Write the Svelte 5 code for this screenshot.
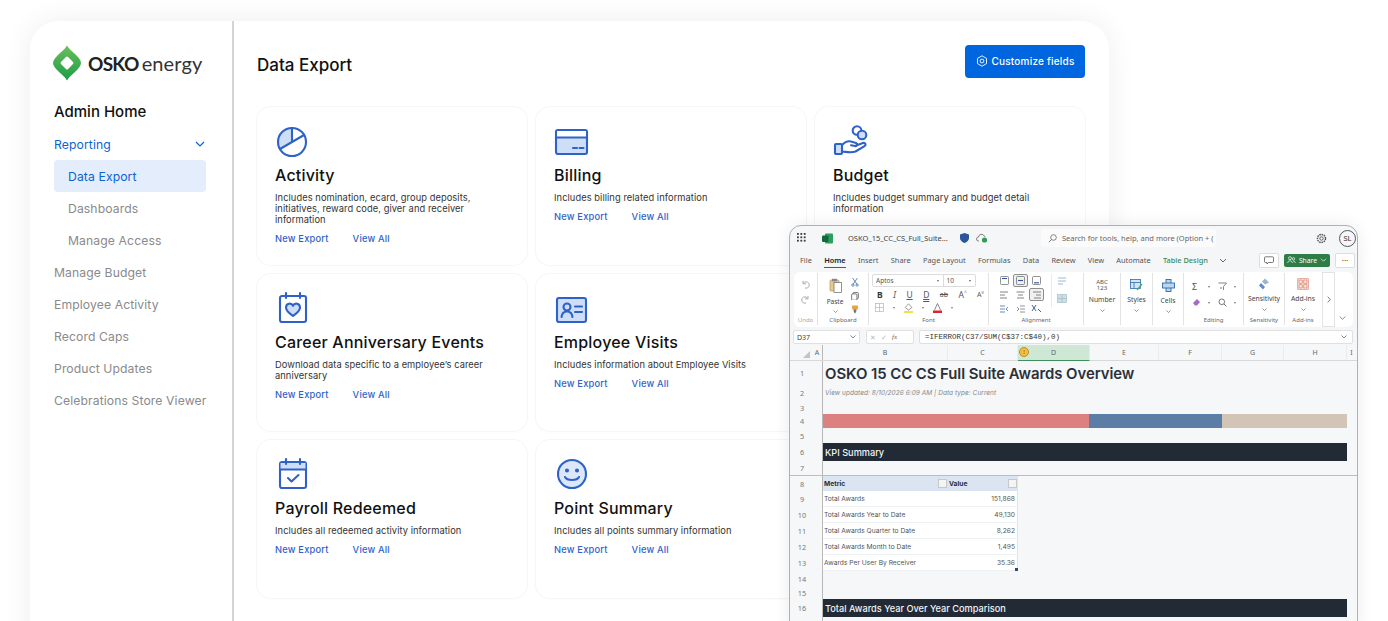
<script>
  const nav = [
    { t: 'Reporting', c: 'active', chevron: true },
    { t: 'Data Export', c: 'sub current' },
    { t: 'Dashboards', c: 'sub' },
    { t: 'Manage Access', c: 'sub' },
    { t: 'Manage Budget', c: '' },
    { t: 'Employee Activity', c: '' },
    { t: 'Record Caps', c: '' },
    { t: 'Product Updates', c: '' },
    { t: 'Celebrations Store Viewer', c: '' }
  ];
  const cards = [
    { id: 'pie', t: 'Activity', d: 'Includes nomination, ecard, group deposits, initiatives, reward code, giver and receiver information', links: true },
    { id: 'bill', t: 'Billing', d: 'Includes billing related information', links: true },
    { id: 'budget', t: 'Budget', d: 'Includes budget summary and budget detail information', links: false },
    { id: 'heart', t: 'Career Anniversary Events', d: 'Download data specific to a employee\u2019s career anniversary', links: true },
    { id: 'person', t: 'Employee Visits', d: 'Includes information about Employee Visits', links: true },
    { id: 'none', t: '', d: '' },
    { id: 'check', t: 'Payroll Redeemed', d: 'Includes all redeemed activity information', links: true },
    { id: 'smile', t: 'Point Summary', d: 'Includes all points summary information', links: true },
    { id: 'none', t: '', d: '' }
  ];
  const tabs = ['File', 'Home', 'Insert', 'Share', 'Page Layout', 'Formulas', 'Data', 'Review', 'View', 'Automate'];
  const cols = [['B', 'b'], ['C', 'c'], ['D', 'd'], ['E', 'e'], ['F', 'f'], ['G', 'g'], ['H', 'h'], ['I', 'i']];
  const rows = [
    { n: 1, h: 24, k: 'title' }, { n: 2, h: 16, k: 'sub' }, { n: 3, h: 13 }, { n: 4, h: 14, k: 'bars' },
    { n: 5, h: 15 }, { n: 6, h: 18, k: 'band', t: 'KPI Summary' }, { n: 7, h: 15, k: 'freeze' },
    { n: 8, h: 15, k: 'thead' },
    { n: 9, h: 16, k: 'tr', a: 'Total Awards', b: '151,868' },
    { n: 10, h: 16, k: 'tr', a: 'Total Awards Year to Date', b: '49,130' },
    { n: 11, h: 16, k: 'tr', a: 'Total Awards Quarter to Date', b: '8,262' },
    { n: 12, h: 16, k: 'tr', a: 'Total Awards Month to Date', b: '1,495' },
    { n: 13, h: 16, k: 'tr last', a: 'Awards Per User By Receiver', b: '35.36' },
    { n: 14, h: 16 }, { n: 15, h: 12 }, { n: 16, h: 18, k: 'band', t: 'Total Awards Year Over Year Comparison' }, { n: '', h: 10 }
  ];
</script>

<div class="page">
  <div class="shell">
    <aside class="side">
      <div class="logo">
        <svg class="mark" viewBox="0 0 28 36" width="28" height="36">
          <defs>
            <linearGradient id="lg" x1="0" y1="0" x2="0" y2="1">
              <stop offset="0" stop-color="#6cbf5c" />
              <stop offset="1" stop-color="#1c9c47" />
            </linearGradient>
          </defs>
          <path d="M14 0.5 C16 4 19 6 22 9 C25 12 28 15 28 18 C28 21 25 24 22 27 C19 30 16 32 14 35.5 C12 32 9 30 6 27 C3 24 0 21 0 18 C0 15 3 12 6 9 C9 6 12 4 14 0.5 Z" fill="url(#lg)" />
          <rect x="9" y="13" width="10" height="10" rx="1.5" fill="#fff" transform="rotate(45 14 18)" />
        </svg>
        <span class="osko">OSKO</span><span class="energy">energy</span>
      </div>
      <div class="home">Admin Home</div>
      <nav>
        {#each nav as n}
          <div class="nav {n.c}">
            <span>{n.t}</span>
            {#if n.chevron}
              <svg width="10" height="6" viewBox="0 0 10 6"><path d="M1 1l4 4 4-4" fill="none" stroke="#0b63d6" stroke-width="1.2" /></svg>
            {/if}
          </div>
        {/each}
      </nav>
    </aside>

    <main class="main">
      <header class="head">
        <h1>Data Export</h1>
        <button class="cta">
          <svg width="12" height="12" viewBox="0 0 12 12" fill="none" stroke="#fff" stroke-width="0.9"><path d="M6 .8l4.5 2.6v5.2L6 11.2 1.5 8.6V3.4z" stroke-linejoin="round" /><circle cx="6" cy="6" r="1.9" /></svg>
          Customize fields
        </button>
      </header>
      <section class="grid">
        {#each cards as c}
          <article class="card">
            {#if c.id !== 'none'}
              <div class="ico {c.id}">
                <svg width="36" height="34" viewBox="0 0 36 34" fill="none" stroke="#2f62c9" stroke-width="2.1" stroke-linejoin="round" stroke-linecap="round">
                  {#if c.id === 'pie'}
                    <path d="M17 18 L17 4 A14 14 0 0 0 5 25 Z" fill="#cfdef8" stroke="none" />
                    <circle cx="17" cy="18" r="14" />
                    <path d="M17 4 V18 L29 11 M17 18 L5 25" />
                  {:else if c.id === 'bill'}
                    <rect x="2" y="6" width="31" height="24" rx="2" fill="#cfdef8" />
                    <path d="M3 7h29v6H3z" fill="#fff" stroke="none" />
                    <path d="M2 13.5h31M19 24h4M25.5 24h4" />
                  {:else if c.id === 'budget'}
                    <circle cx="24" cy="6.5" r="4.3" />
                    <circle cx="29" cy="11" r="4.3" fill="#cfdef8" />
                    <path d="M9 21c3-3 6-4.500 9-3.500l5 1.500c2 1 1 3.500-1 3l-4-.8M23 21.500l7-2.500c2.500-.5 3.500 2 1.500 3.200l-9 5.300c-4 1.500-8 .5-13.500 0" fill="#fff" />
                    <rect x="2" y="20" width="7" height="10" rx="1" fill="#cfdef8" />
                  {:else if c.id === 'heart'}
                    <rect x="5" y="5" width="26" height="26" rx="2" />
                    <path d="M11 2v5M25 2v5" />
                    <path d="M18 25c-4-3-7-5-7-8.500 0-4.500 5.500-5 7-1.800 1.500-3.200 7-2.700 7 1.800C25 20 22 22 18 25z" fill="#cfdef8" />
                  {:else if c.id === 'person'}
                    <rect x="3" y="7" width="29" height="24" rx="2" fill="#cfdef8" />
                    <circle cx="13" cy="16" r="3.500" />
                    <path d="M7.500 26c.5-4 3-5.500 5.500-5.500s5 1.500 5.500 5.500M21 15.500h7M21 21h7" />
                  {:else if c.id === 'check'}
                    <rect x="5" y="5" width="26" height="26" rx="2" />
                    <path d="M5.500 6h25v6h-25z" fill="#cfdef8" stroke="none" />
                    <path d="M5 12.500h26M11 2v5M25 2v5M13 21l3.500 3.500 7-6.500" />
                  {:else if c.id === 'smile'}
                    <circle cx="18" cy="17" r="14" fill="#dce7fa" />
                    <circle cx="13" cy="13.500" r="1" fill="#2f62c9" />
                    <circle cx="23" cy="13.500" r="1" fill="#2f62c9" />
                    <path d="M11 20c2 4 12 4 14 0" />
                  {/if}
                </svg>
              </div>
              <h2>{c.t}</h2>
              <p>{c.d}</p>
              {#if c.links}
                <div class="links"><a href="#a">New Export</a><a href="#b">View All</a></div>
              {/if}
            {/if}
          </article>
        {/each}
      </section>
    </main>
  </div>

  <div class="xl">
    <div class="titlebar">
      <svg class="waffle" width="9" height="10" viewBox="0 0 9 10" fill="#3b3b3b">
        {#each [0, 3.4, 6.8] as y}{#each [0, 3.4, 6.8] as x}<rect {x} {y} width="1.800" height="1.800" />{/each}{/each}
      </svg>
      <svg class="xicon" width="11" height="11" viewBox="0 0 11 11"><rect x="3" y="0.500" width="8" height="10" rx="1" fill="#2e9e5f" /><rect x="0" y="2.500" width="6.500" height="6.500" rx="1" fill="#0f6b38" /></svg>
      <span class="fname">OSKO_15_CC_CS_Full_Suite...</span>
      <svg class="shield" width="9" height="10" viewBox="0 0 9 10"><path d="M4.500 0L9 1.500V5c0 2.500-2 4-4.500 5C2 9 0 7.500 0 5V1.500z" fill="#2b579a" /></svg>
      <svg class="cloud" width="12" height="10" viewBox="0 0 12 10" fill="none"><path d="M3 8H2.500a2 2 0 0 1 0-4 3 3 0 0 1 5.700-1A2.500 2.500 0 0 1 9.500 4" stroke="#666" stroke-width=".8" /><circle cx="8.500" cy="7" r="2.600" fill="#2f9e54" /></svg>
      <div class="search">
        <svg width="9" height="9" viewBox="0 0 9 9" fill="none" stroke="#666" stroke-width=".8"><circle cx="5.500" cy="3.500" r="2.800" /><path d="M3.500 5.500L.8 8.200" /></svg>
        <span>Search for tools, help, and more (Option + (</span>
      </div>
      <svg class="gear" width="11" height="11" viewBox="0 0 11 11" fill="none" stroke="#555" stroke-width=".9"><circle cx="5.500" cy="5.500" r="1.700" /><circle cx="5.500" cy="5.500" r="4" stroke-dasharray="1.600 .7" stroke-width="1.400" /></svg>
      <div class="avatar">SL</div>
    </div>

    <div class="tabs">
      {#each tabs as t}<span class={t === 'Home' ? 'tab on' : 'tab'}>{t}</span>{/each}
      <span class="tab green">Table Design</span>
      <svg class="tabchev" width="8" height="5" viewBox="0 0 8 5"><path d="M1 1l3 3 3-3" fill="none" stroke="#444" stroke-width=".8" /></svg>
      <div class="tabright">
        <span class="mini"><svg width="10" height="9" viewBox="0 0 10 9"><path d="M1.500 .8h7a1 1 0 0 1 1 1v3.700a1 1 0 0 1-1 1H4.500L3 8V6.500H1.500a1 1 0 0 1-1-1V1.800a1 1 0 0 1 1-1z" fill="none" stroke="#444" stroke-width=".7" /></svg></span>
        <span class="share">
          <svg width="9" height="8" viewBox="0 0 9 8" fill="none" stroke="#fff" stroke-width=".7"><circle cx="3" cy="2.200" r="1.500" /><circle cx="6.500" cy="2.800" r="1.200" /><path d="M.7 7c0-3 4.600-3 4.600 0M6 5c1.500 0 2.300 1 2.300 2" /></svg>
          Share
          <svg width="7" height="4" viewBox="0 0 7 4"><path d="M1 .7l2.500 2.500L6 .7" fill="none" stroke="#fff" stroke-width=".7" /></svg>
        </span>
        <span class="mini more">···</span>
      </div>
    </div>

    <div class="ribbon">
      <div class="rg r-undo">
        <div class="rb col">
          <svg width="9" height="9" viewBox="0 0 9 9" fill="none" stroke="#a5a5a5" stroke-width=".9"><path d="M2 .8v3h3M2.200 3.600A3.200 3.200 0 1 1 4 8" /></svg>
          <svg width="9" height="9" viewBox="0 0 9 9" fill="none" stroke="#a5a5a5" stroke-width=".9"><path d="M7 .8v3H4M6.800 3.600A3.200 3.200 0 1 0 5 8" /></svg>
        </div>
        <div class="rl dim">Undo</div>
      </div>
      <div class="rg r-clip">
        <div class="rb clip">
          <div class="paste">
            <svg width="13" height="15" viewBox="0 0 13 15"><rect x="1" y="2" width="9" height="11" rx="1" fill="#e9c98c" stroke="#a98a55" stroke-width=".6" /><rect x="5" y="4.500" width="7.500" height="10" fill="#fff" stroke="#666" stroke-width=".7" /><rect x="3" y=".8" width="5" height="2.500" fill="#888" /></svg>
            <span>Paste</span>
            <svg width="5" height="3" viewBox="0 0 5 3"><path d="M.5.500l2 2 2-2" fill="none" stroke="#555" stroke-width=".6" /></svg>
          </div>
          <div class="col clipicons">
            <svg width="8" height="9" viewBox="0 0 8 9" fill="none" stroke="#3b6ea5" stroke-width=".8"><path d="M1.500 0l4.500 6.500M6.500 0L2 6.500" /><circle cx="1.800" cy="7.300" r="1.200" /><circle cx="6.200" cy="7.300" r="1.200" /></svg>
            <svg width="8" height="9" viewBox="0 0 8 9" fill="none" stroke="#555" stroke-width=".8"><rect x="2" y=".5" width="5.500" height="6.500" rx="1" /><rect x=".5" y="2" width="5.500" height="6.500" rx="1" fill="#fff" /></svg>
            <svg width="8" height="9" viewBox="0 0 8 9"><rect x="1" y=".5" width="6" height="4" fill="#e8a33d" /><path d="M2.500 4.500h3v1.500l-1 2.500h-1l-1-2.500z" fill="#777" /></svg>
          </div>
        </div>
        <div class="rl">Clipboard</div>
      </div>
      <div class="rg r-font">
        <div class="rb fontb">
          <div class="fontrow1">
            <span class="sel wide">Aptos<i></i></span><span class="sel narrow">10<i></i></span>
          </div>
          <div class="fontrow2">
            <b>B</b><em>I</em><u>U</u><u class="dbl">D</u><s>ab</s><span>A<sup>^</sup></span><span class="sm">A<sup>v</sup></span>
          </div>
          <div class="fontrow3">
            <svg width="9" height="9" viewBox="0 0 9 9" fill="none" stroke="#b5b5b5" stroke-width=".7"><rect x=".5" y=".5" width="8" height="8" /><path d="M4.500 .5v8M.5 4.500h8" /></svg>
            <i class="car"></i>
            <svg width="9" height="10" viewBox="0 0 9 10"><path d="M4.500 .8L8 4.500 4.500 7 1.200 4.500z" fill="#fff" stroke="#777" stroke-width=".7" /><rect y="8" width="9" height="2" fill="#f2e33a" /></svg>
            <i class="car"></i>
            <svg width="9" height="10" viewBox="0 0 9 10"><path d="M1.500 7L4.500 .5 7.500 7" fill="none" stroke="#777" stroke-width=".9" /><rect y="7.500" width="9" height="2.500" fill="#d6282b" /></svg>
            <i class="car"></i>
          </div>
        </div>
        <div class="rl">Font</div>
      </div>
      <div class="rg r-align">
        <div class="rb alignb">
          <div class="aligngrid">
            {#each ['t', 'm', 'b', 'l', 'c', 'r'] as a, i}
              <span class={i === 1 || i === 5 ? 'ab sel2' : 'ab'}>
                {#if i < 3}
                  <svg width="9" height="9" viewBox="0 0 9 9" fill="none" stroke="#666" stroke-width=".7"><rect x=".5" y=".5" width="8" height="8" rx="1" /><path d={i === 0 ? 'M2 2.500h5' : i === 1 ? 'M2 4.500h5' : 'M2 6.800h5'} stroke="#2b579a" stroke-width="1.100" /></svg>
                {:else}
                  <svg width="9" height="8" viewBox="0 0 9 8" fill="none" stroke="#666" stroke-width=".8"><path d={i === 3 ? 'M0 1h8M0 4h5M0 7h7' : i === 4 ? 'M.5 1h8M2 4h5M1 7h7' : 'M1 1h8M4 4h5M2 7h7'} /></svg>
                {/if}
              </span>
            {/each}
            <span class="ab"><svg width="9" height="8" viewBox="0 0 9 8" fill="none" stroke="#666" stroke-width=".7"><path d="M0 1h5M0 4h5M0 7h5M8 2L6 4l2 2" stroke="#2b579a" /></svg></span>
            <span class="ab"><svg width="9" height="8" viewBox="0 0 9 8" fill="none" stroke="#666" stroke-width=".7"><path d="M4 1h5M4 4h5M4 7h5M1 2l2 2-2 2" /></svg></span>
            <span class="ab"><svg width="11" height="9" viewBox="0 0 11 9" fill="none" stroke="#2b579a" stroke-width=".9"><path d="M1 1l4 6M5 1L1 7M7 5l3 3" /></svg></span>
          </div>
          <div class="alignside">
            <svg width="10" height="9" viewBox="0 0 10 9" fill="none" stroke="#8aa4c8" stroke-width=".8"><path d="M1 1h8M1 4h8M1 7h5" /></svg>
            <svg width="10" height="9" viewBox="0 0 10 9" fill="#cfdcec" stroke="#9bb" stroke-width=".6"><rect x=".5" y=".5" width="9" height="8" /><path d="M5 .5v8M.5 4.500h9" /></svg>
          </div>
        </div>
        <div class="rl">Alignment</div>
      </div>
      <div class="rg r-num big">
        <div class="abc">ABC<br />123</div><span class="lab">Number</span>
        <svg width="5" height="3" viewBox="0 0 5 3"><path d="M.5.500l2 2 2-2" fill="none" stroke="#555" stroke-width=".6" /></svg>
      </div>
      <div class="rg r-sty big">
        <svg width="13" height="12" viewBox="0 0 13 12" fill="none" stroke="#2b6cb0" stroke-width=".8"><rect x=".5" y=".5" width="10" height="9" fill="#d6e4f3" /><path d="M.5 3.500h10M4 3.500v6" /><path d="M7 11l5-6" stroke="#4caf50" stroke-width="1.200" /></svg>
        <span class="lab">Styles</span>
        <svg width="5" height="3" viewBox="0 0 5 3"><path d="M.5.500l2 2 2-2" fill="none" stroke="#555" stroke-width=".6" /></svg>
      </div>
      <div class="rg r-cell big">
        <svg width="13" height="13" viewBox="0 0 13 13" fill="none" stroke="#2b6cb0" stroke-width=".9"><rect x="4" y=".5" width="5" height="12" fill="#bcd6f0" /><rect x=".5" y="4" width="12" height="5" fill="#bcd6f0" /></svg>
        <span class="lab">Cells</span>
        <svg width="5" height="3" viewBox="0 0 5 3"><path d="M.5.500l2 2 2-2" fill="none" stroke="#555" stroke-width=".6" /></svg>
      </div>
      <div class="rg r-edit">
        <div class="rb editb">
          <span class="sig">Σ</span><i class="car"></i>
          <svg width="9" height="9" viewBox="0 0 9 9" fill="none" stroke="#666" stroke-width=".8"><path d="M.5 1h8L5.500 4.500V8" /><path d="M2 6h2" stroke="#2b579a" /></svg><i class="car"></i>
          <svg width="9" height="9" viewBox="0 0 9 9"><path d="M1 5l4-4 3 3-3 3.500H3z" fill="#a56bc5" /></svg><i class="car"></i>
          <svg width="9" height="9" viewBox="0 0 9 9" fill="none" stroke="#555" stroke-width=".8"><circle cx="3.800" cy="3.800" r="2.800" /><path d="M6 6l2.500 2.500" /></svg><i class="car"></i>
        </div>
        <div class="rl">Editing</div>
      </div>
      <div class="rg r-sens">
        <div class="rb bigb">
          <svg width="12" height="12" viewBox="0 0 12 12"><path d="M7 .5l4 4-4 2-3-3z" fill="#9cb4d0" /><path d="M3 5l4 4-2 2.500-4-4z" fill="#5f8fc4" /></svg>
          <span class="lab">Sensitivity</span>
          <svg width="5" height="3" viewBox="0 0 5 3"><path d="M.5.500l2 2 2-2" fill="none" stroke="#555" stroke-width=".6" /></svg>
        </div>
        <div class="rl">Sensitivity</div>
      </div>
      <div class="rg r-add last">
        <div class="rb bigb">
          <svg width="12" height="12" viewBox="0 0 12 12" fill="none" stroke="#d46a4f" stroke-width=".6"><rect x=".3" y=".3" width="11.400" height="11.400" rx="1.500" fill="#fbe9e3" /><rect x="2" y="2" width="3.200" height="3.200" /><rect x="6.800" y="2" width="3.200" height="3.200" /><rect x="2" y="6.800" width="3.200" height="3.200" /><rect x="6.800" y="6.800" width="3.200" height="3.200" /></svg>
          <span class="lab">Add-ins</span>
          <svg width="5" height="3" viewBox="0 0 5 3"><path d="M.5.500l2 2 2-2" fill="none" stroke="#555" stroke-width=".6" /></svg>
        </div>
        <div class="rl">Add-ins</div>
      </div>
      <div class="arrowbtn"><svg width="4" height="7" viewBox="0 0 4 7"><path d="M.7.700l2.600 2.800L.7 6.300" fill="none" stroke="#444" stroke-width=".7" /></svg></div>
      <svg class="collapse" width="7" height="4" viewBox="0 0 7 4"><path d="M.7.500l2.800 2.800L6.300.500" fill="none" stroke="#555" stroke-width=".7" /></svg>
    </div>

    <div class="fbar">
      <div class="namebox">D37<svg width="6" height="4" viewBox="0 0 6 4"><path d="M.5.500l2.500 2.500L5.500.500" fill="none" stroke="#555" stroke-width=".7" /></svg></div>
      <div class="fxbox"><span>✕</span><span>✓</span><em>fx</em></div>
      <div class="formula"><span>=IFERROR(C37/SUM(C$37:C$40),0)</span><svg width="6" height="4" viewBox="0 0 6 4"><path d="M.5.500l2.500 2.500L5.500.500" fill="none" stroke="#555" stroke-width=".7" /></svg></div>
    </div>

    <div class="sheet">
      <div class="colhead">
        <div class="corner"><svg width="7" height="7" viewBox="0 0 7 7"><path d="M7 0v7H0z" fill="#c4c4c4" /></svg></div>
        <div class="ca">A</div>
        {#each cols as c}
          <div class="ch {c[1]}">
            {#if c[0] === 'D'}<i class="warn">!</i>{/if}{c[0]}
          </div>
        {/each}
      </div>
      {#each rows as r}
        <div class={r.k === 'freeze' ? 'row freeze' : 'row'} style="height:{r.h}px">
          <div class="rn">{r.n}</div>
          <div class="ra"></div>
          <div class="rc">
            {#if r.k === 'title'}
              <div class="s-title">OSKO 15 CC CS Full Suite Awards Overview</div>
            {:else if r.k === 'sub'}
              <div class="s-sub">View updated: 8/10/2026 6:09 AM | Data type: Current</div>
            {:else if r.k === 'bars'}
              <div class="bars"><i class="red"></i><i class="blue"></i><i class="tan"></i></div>
            {:else if r.k === 'band'}
              <div class="band">{r.t}</div>
            {:else if r.k === 'thead'}
              <div class="tbl thead"><span>Metric<i class="fbtn"></i></span><span>Value<i class="fbtn"></i></span></div>
            {:else if r.k && r.k.startsWith('tr')}
              <div class={r.k === 'tr last' ? 'tbl tbody lastr' : 'tbl tbody'}><span>{r.a}</span><span class="num">{r.b}</span></div>
            {/if}
          </div>
        </div>
      {/each}
    </div>
  </div>
</div>

<style>
  :global(body) { margin: 0; background: #fff; overflow: hidden; }
  .page {
    position: relative; width: 1388px; height: 621px; overflow: hidden;
    padding: 21px 0 0 30px; box-sizing: border-box; background: #fff;
    font-family: Inter, "Liberation Sans", sans-serif; color: #111;
  }
  .shell {
    display: flex; width: 1079px; height: 680px; background: #fff;
    border-radius: 28px; box-shadow: 0 0 30px rgba(0, 0, 0, .07);
  }
  .side { width: 204px; flex: none; box-sizing: border-box; padding: 24px 26px 0 24px; border-right: 2px solid #d4d4d4; }
  .logo { display: flex; align-items: center; height: 36px; margin-left: -1px; }
  .mark { margin-right: 7px; flex: none; }
  .osko { font: 700 19px/1 Lato, sans-serif; letter-spacing: -.7px; color: #222; margin-right: 3px; }
  .energy { font: 400 20px/1 Lato, sans-serif; color: #333; letter-spacing: .1px; }
  .home { margin-top: 21px; font-size: 15px; font-weight: 500; line-height: 20px; height: 20px; }
  nav { margin-top: 6px; display: flex; flex-direction: column; }
  .nav { height: 32px; display: flex; align-items: center; justify-content: space-between; font-size: 12.200px; color: #8a8a8a; letter-spacing: .1px; white-space: nowrap; }
  .nav.active { color: #0b63d6; padding-right: 1px; }
  .nav.sub { padding-left: 14px; }
  .nav.current { background: #e3edfb; color: #0b63d6; border-radius: 4px; }

  .main { flex: 1; padding: 24px 24px 0 23px; }
  .head { display: flex; justify-content: space-between; align-items: center; height: 32px; }
  h1 { margin: 0; padding-top: 8px; font-size: 17px; font-weight: 500; }
  .cta {
    width: 120px; height: 33px; border: 0; border-radius: 4px; background: #0066e0; color: #fff;
    display: flex; align-items: center; justify-content: center; gap: 4px;
    font: 500 10px Inter, sans-serif; letter-spacing: .2px;
  }
  .grid { margin-top: 30px; display: grid; grid-template-columns: repeat(3, 270px); grid-auto-rows: 157.500px; gap: 9px; }
  .card {
    background: #fff; border-radius: 14px; box-shadow: 0 0 0 1px #f6f6f6, 0 1px 5px rgba(0, 0, 0, .02);
    padding: 17px 18px 0; box-sizing: border-box;
  }
  .ico { height: 36px; margin-left: 0; }
  .ico svg { display: block; }
  h2 { margin: 5px 0 0; font-size: 16px; line-height: 20px; font-weight: 500; letter-spacing: .2px; }
  p { margin: 7px 0 0; font-size: 9.300px; line-height: 11px; color: #333; letter-spacing: .07px; max-width: 215px; }
  .links { display: flex; gap: 24px; margin-top: 7px; }
  .links a { font-size: 9.300px; line-height: 14px; font-weight: 500; color: #2f62c9; text-decoration: none; letter-spacing: .2px; }

  .xl {
    position: absolute; left: 789px; top: 225px; width: 569px; height: 410px; box-sizing: border-box;
    border: 1.500px solid #aeb0b2; border-radius: 12px 12px 0 0; background: #f4f6f8;
    box-shadow: 0 0 18px rgba(0, 0, 0, .08); overflow: hidden;
    font-family: "Noto Sans", "Open Sans", sans-serif; color: #444;
  }
  .titlebar { position: relative; height: 24px; display: flex; align-items: center; }
  .waffle { margin-left: 7px; }
  .xicon { margin-left: 16px; }
  .fname { margin-left: 15px; width: 107px; font-size: 7.500px; color: #444; white-space: nowrap; }
  .shield { margin-left: 5px; }
  .cloud { margin-left: 7px; }
  .search {
    margin-left: 53px; width: 175px; height: 18px; background: #fbfbfc; border-radius: 4px;
    display: flex; align-items: center; font-size: 7.500px; color: #666; white-space: nowrap; overflow: hidden; box-sizing: border-box; padding-left: 7px; gap: 5px;
  }
  .gear { margin-left: 100px; }
  .avatar { margin-left: 12px; width: 17px; height: 17px; border: .8px solid #555; border-radius: 50%; font-size: 7.500px; display: flex; align-items: center; justify-content: center; box-sizing: border-box; color: #333; }
  .tabs { height: 20px; display: flex; align-items: center; padding-left: 10px; gap: 12.300px; font-size: 7.400px; color: #555; }
  .tab { position: relative; white-space: nowrap; }
  .tab.on { color: #222; font-weight: 600; }
  .tab.on::after { content: ""; position: absolute; left: 0; right: 0; bottom: -3px; height: 1.500px; background: #1f7a46; }
  .tab.green { color: #3c8a5a; font-weight: 500; }
  .tabchev { margin-left: -1px; }
  .tabright { margin-left: auto; display: flex; align-items: center; gap: 5px; padding-right: 2px; }
  .mini { width: 18px; height: 13px; background: #fff; border: .6px solid #ddd; border-radius: 2px; display: flex; align-items: center; justify-content: center; }
  .more { font-size: 8px; letter-spacing: 0; color: #444; }
  .share { width: 46px; height: 13px; background: #2f7d46; color: #fff; border-radius: 2px; display: flex; align-items: center; justify-content: center; gap: 3px; font-size: 6.800px; }

  .ribbon { position: relative; margin: 2px 4px 0; height: 55px; background: #fff; border-radius: 6px; display: flex; }
  .rg { display: flex; flex-direction: column; box-sizing: border-box; height: 52px; margin-top: 1px; border-right: .8px solid #e3e3e3; align-items: center; }
  .rg.last { border-right: 0; }
  .rb { flex: none; height: 41px; display: flex; width: 100%; }
  .rl { height: 11px; margin-top: 1px; font-size: 6px; line-height: 10px; color: #666; text-align: center; }
  .rl.dim { color: #a8a8a8; }
  .col { flex-direction: column; align-items: center; gap: 6px; padding-top: 7px; box-sizing: border-box; }
  .r-undo { width: 24px; }
  .r-clip { width: 51px; }
  .clip { justify-content: center; gap: 8px; padding-top: 1px; box-sizing: border-box; }
  .paste { display: flex; flex-direction: column; align-items: center; gap: 4px; font-size: 6.500px; color: #444; padding-top: 4px; }
  .clipicons { padding-top: 4px; gap: 5px; display: flex; }
  .r-font { width: 120px; }
  .fontb { flex-direction: column; padding: 1px 6px 0 3px; box-sizing: border-box; }
  .fontrow1 { display: flex; flex: none; width: 104px; height: 13px; border: .6px solid #dcdcdc; border-radius: 2px; font-size: 6.500px; color: #555; box-sizing: border-box; }
  .sel { position: relative; display: flex; align-items: center; padding-left: 3px; box-sizing: border-box; }
  .sel i { position: absolute; right: 4px; top: 5px; border: 1.500px solid transparent; border-top: 2px solid #666; }
  .wide { width: 72px; border-right: .6px solid #dcdcdc; }
  .narrow { width: 32px; }
  .fontrow2 { display: flex; flex: none; align-items: center; gap: 10.500px; padding-left: 5px; height: 14px; font-size: 8.500px; color: #555; }
  .fontrow2 b { color: #333; }
  .fontrow2 s { font-size: 7px; }
  .fontrow2 sup { font-size: 4.500px; color: #3b6ea5; line-height: 0; }
  .fontrow2 .sm { font-size: 7px; }
  .dbl { text-decoration-style: double; }
  .fontrow3 { display: flex; flex: none; align-items: center; gap: 5px; padding-left: 3px; height: 13px; }
  .car { display: inline-block; border: 1.500px solid transparent; border-top: 2px solid #777; margin: 2px 4px 0 4px; height: 0; width: 0; }
  .r-align { width: 95px; }
  .alignb { padding: 1px 0 0 8px; box-sizing: border-box; gap: 6px; }
  .aligngrid { display: grid; grid-template-columns: repeat(3, 16px); grid-auto-rows: 13px; gap: 1px 0; height: 41px; }
  .ab { display: flex; align-items: center; justify-content: center; width: 15px; height: 13px; box-sizing: border-box; }
  .sel2 { border: .7px solid #8f8f8f; border-radius: 2px; background: #f0f0f0; }
  .alignside { display: flex; flex-direction: column; gap: 8px; padding-top: 3px; padding-left: 5px; border-left: .8px solid #e9e9e9; height: 30px; }
  .big { padding-top: 6px; gap: 4px; }
  .abc { font-size: 6px; line-height: 6px; color: #555; text-align: center; height: 12px; }
  .lab { font-size: 6.800px; line-height: 10px; color: #444; white-space: nowrap; }
  .r-num { width: 37px; }
  .r-sty { width: 32px; }
  .r-cell { width: 31px; }
  .r-edit { width: 60px; }
  .editb { display: grid; grid-template-columns: 13px 13px 13px 13px; grid-auto-rows: 16px; padding: 5px 0 0 8px; box-sizing: border-box; align-items: center; }
  .editb .car { margin-left: 3px; }
  .sig { font-size: 9px; line-height: 9px; color: #555; }
  .r-sens { width: 41px; }
  .r-add { width: 36px; }
  .bigb { flex-direction: column; align-items: center; gap: 4px; padding-top: 5px; box-sizing: border-box; }
  .arrowbtn { position: absolute; left: 528px; top: 0; width: 13px; height: 55px; border: .6px solid #e3e3e3; box-sizing: border-box; display: flex; align-items: center; justify-content: center; }
  .collapse { position: absolute; right: 7px; bottom: 7px; }
  .fbar { height: 14px; margin: 3px 4px 0 3px; display: flex; gap: 6px; }
  .namebox, .fxbox, .formula { background: #fff; border: .6px solid #e0e0e0; border-radius: 2px; display: flex; align-items: center; box-sizing: border-box; }
  .namebox { width: 67px; font-size: 7px; padding: 0 3px; justify-content: space-between; }
  .fxbox { width: 48px; font-size: 7px; color: #bbb; padding-left: 3px; gap: 5px; }
  .fxbox em { color: #666; font-family: "Liberation Serif", serif; }
  .formula { flex: 1; margin-left: -1px; font: 7.500px "Liberation Mono", monospace; color: #333; padding: 0 5px; justify-content: space-between; }
  .sheet { margin-top: 1px; background: #f5f7f9; }
  .colhead { display: flex; height: 16px; border-bottom: .8px solid #d8d8d8; box-sizing: border-box; font-size: 7px; color: #666; }
  .corner { width: 22px; display: flex; align-items: flex-end; justify-content: flex-end; padding: 0 2px 2px 0; box-sizing: border-box; }
  .ca { width: 11px; text-align: center; line-height: 16px; border-right: 1.500px solid #b8b8b8; box-sizing: border-box; }
  .ch { position: relative; text-align: center; line-height: 15px; box-sizing: border-box; border-right: .6px solid #ebebeb; }
  .b { width: 125px; } .c { width: 70px; } .d { width: 72px; background: #cfe8d5; border-bottom: 1.200px solid #3f8f5d; height: 16px; }
  .e { width: 69px; } .f { width: 63px; } .g { width: 62px; } .h { width: 63px; } .i { width: 9px; border-right: 0; }
  .warn { position: absolute; left: 1px; top: 2px; width: 10px; height: 10px; background: #f0c040; border-radius: 50%; border: .6px solid #c48a20; box-sizing: border-box; font-style: normal; line-height: 9px; font-size: 6px; color: #844; }
  .row { display: flex; box-sizing: border-box; }
  .row.freeze { border-bottom: 1.200px solid #bcbcbc; }
  .rn { width: 22px; flex: none; text-align: center; font-size: 7.300px; color: #777; display: flex; align-items: center; justify-content: center; padding-left: 2px; box-sizing: border-box; }
  .ra { width: 11px; flex: none; border-right: 1.500px solid #b8b8b8; box-sizing: border-box; }
  .rc { width: 524px; display: flex; align-items: center; font-family: Inter, sans-serif; }
  .s-title { font-size: 14.900px; font-weight: 600; color: #2b3038; padding: 2px 0 0 2px; white-space: nowrap; letter-spacing: -.05px; }
  .s-sub { font-size: 6.500px; font-style: italic; color: #888; padding-left: 2px; letter-spacing: .05px; }
  .bars { display: flex; width: 100%; height: 100%; }
  .bars i { display: block; height: 100%; }
  .red { width: 266px; background: #dc8080; }
  .blue { width: 133px; background: #5c7da6; }
  .tan { width: 125px; background: #d3c4b8; }
  .band { width: 100%; height: 100%; background: #212a35; color: #f2f4f6; font-size: 9.200px; font-weight: 500; display: flex; align-items: center; padding-left: 2px; box-sizing: border-box; }
  .tbl { display: flex; width: 195px; height: 100%; font-size: 6.700px; align-items: center; box-sizing: border-box; background: #fff; }
  .tbl span { display: flex; align-items: center; justify-content: space-between; height: 100%; box-sizing: border-box; padding-left: 1px; }
  .tbl span:first-child { width: 125px; }
  .tbl span:last-child { width: 70px; }
  .thead { background: #dbe5f1; font-weight: 700; color: #2b3038; }
  .tbody { color: #555; border-right: .5px solid #dbe5f1; border-bottom: .5px solid #eef1f4; }
  .tbody .num { justify-content: flex-end; padding-right: 2px; }
  .lastr { position: relative; }
  .lastr::after { content: ""; position: absolute; right: -1px; bottom: -1px; width: 3px; height: 3px; background: #2b4a75; }
  .fbtn { width: 9px; height: 9px; margin-right: 1px; border: .6px solid #c8c8c8; background: #f4f4f4; box-sizing: border-box; display: block; }
</style>
